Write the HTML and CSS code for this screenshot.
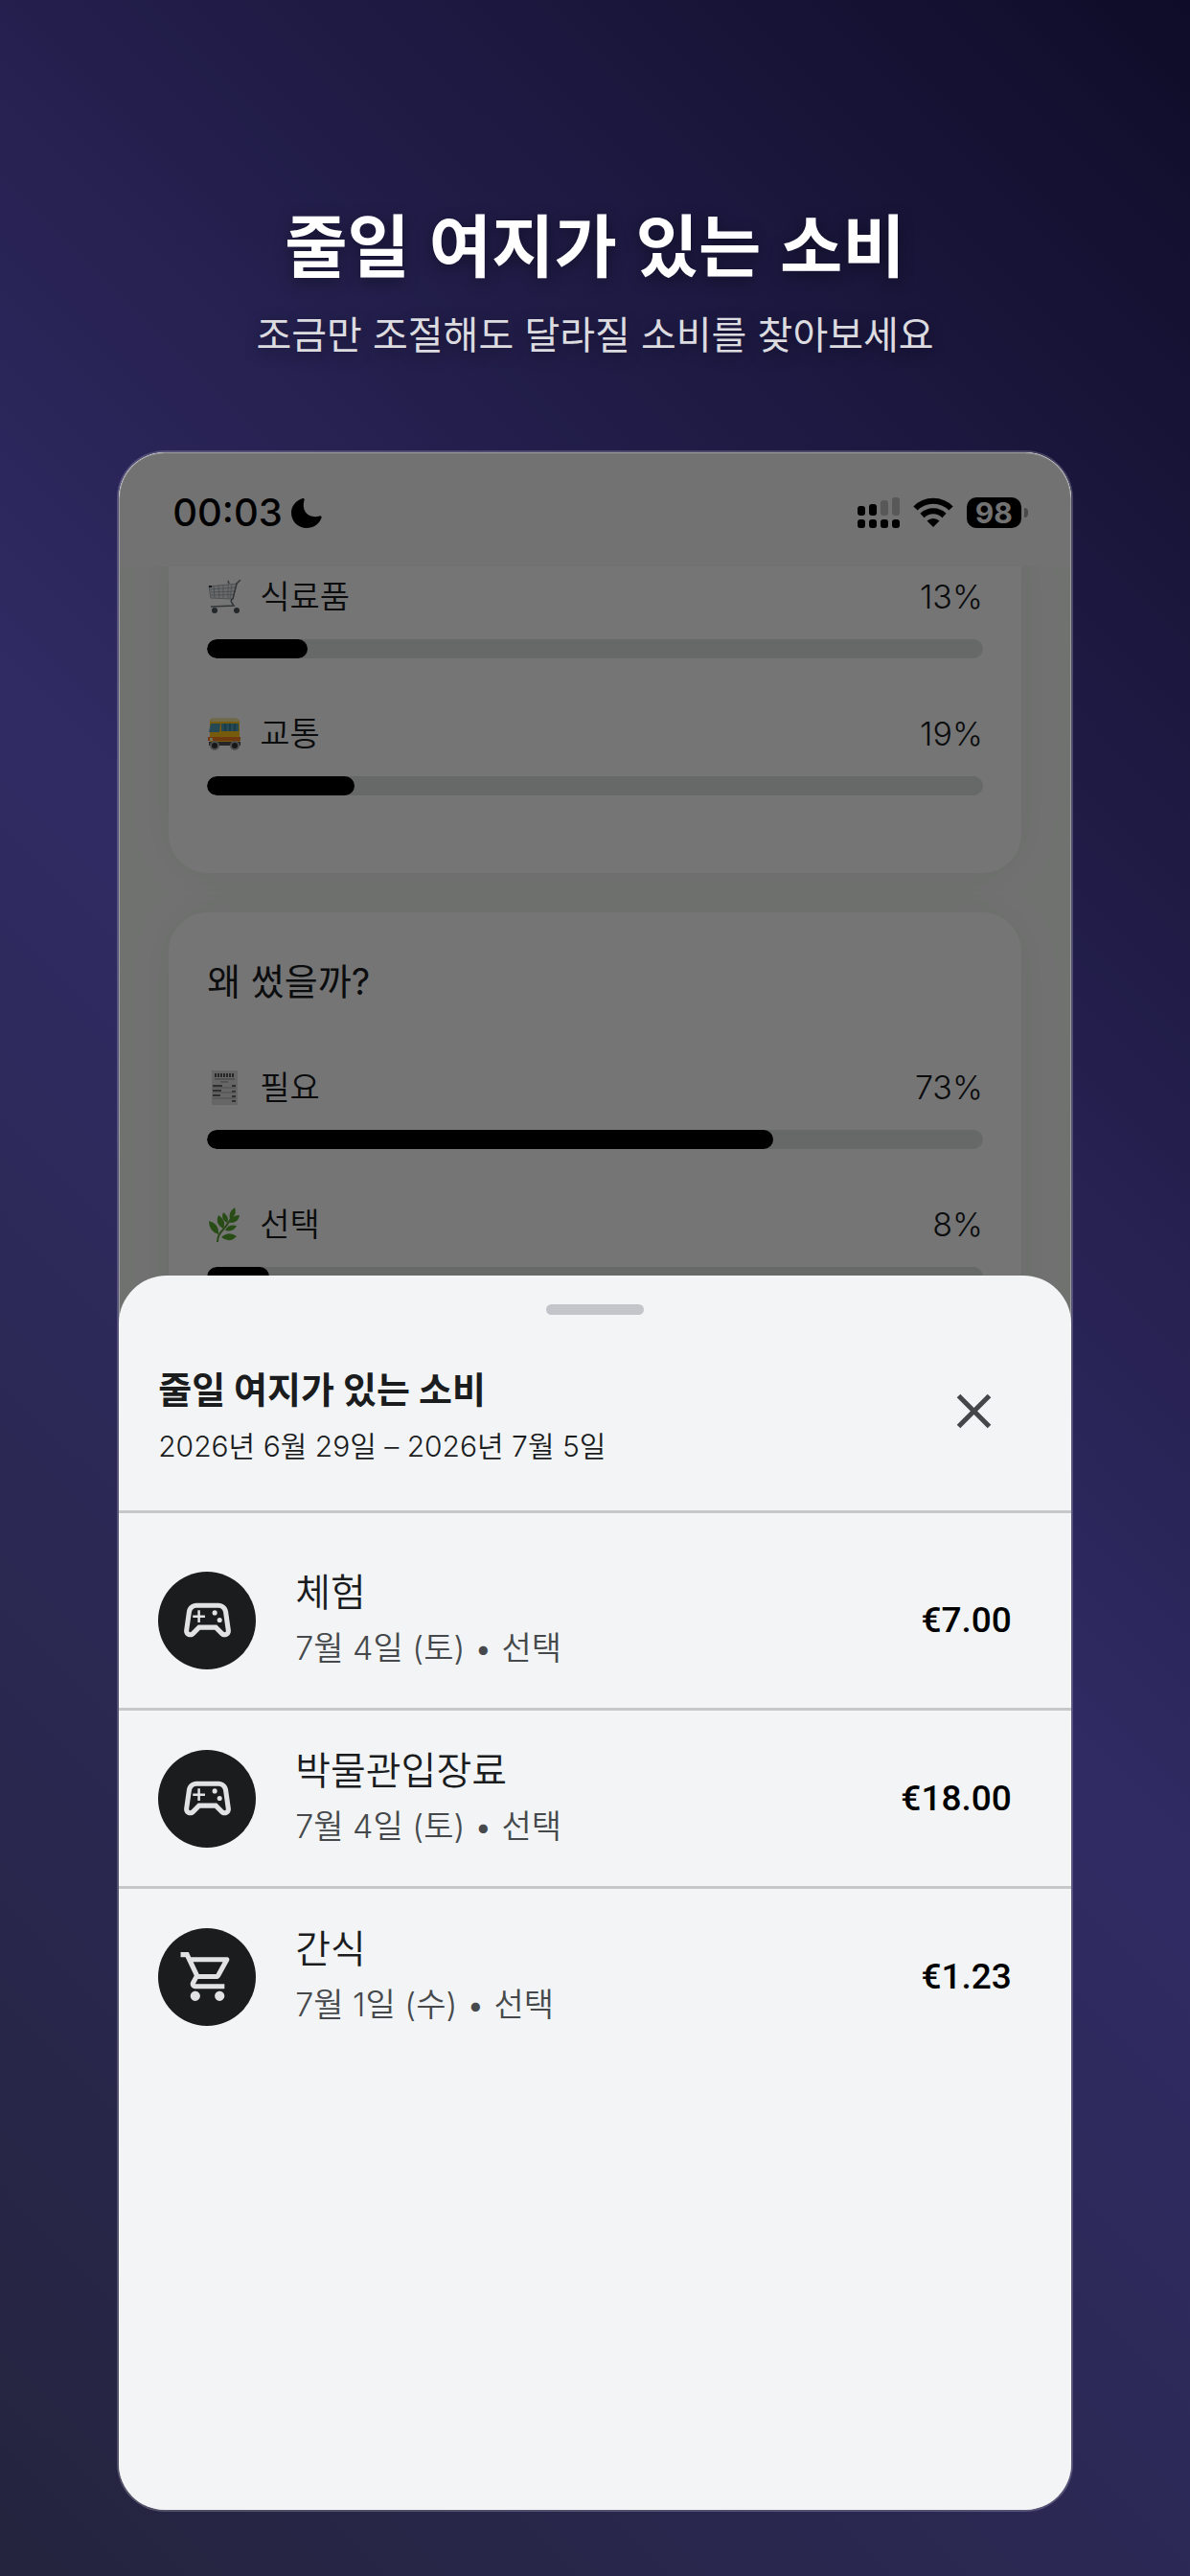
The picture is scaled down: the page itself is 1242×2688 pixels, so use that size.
FILE: index.html
```html
<!DOCTYPE html>
<html lang="ko">
<head>
  <meta charset="UTF-8">
  <meta name="viewport" content="width=device-width, initial-scale=1.0">
  <title>줄일 여지가 있는 소비</title>
  <link rel="stylesheet" href="styles.css">
</head>
<body>
  <header class="hero">
    <h1>줄일 여지가 있는 소비</h1>
    <p>조금만 조절해도 달라질 소비를 찾아보세요</p>
  </header>

  <main class="phone">
    <div class="status-bar">
      <span class="time">00:03</span>
      <svg class="moon" viewBox="0 0 32 32"><path d="M12 1C5 3 0 9 0 16c0 9 7 16 16 16 7 0 13-4 15.500-10.500.4-1.500-.5-2.500-2-2C19 22.500 10 15 13.500 3 14 1.500 13.300.6 12 1z"/></svg>
      <div class="status-icons">
        <svg class="signal" viewBox="0 0 44 32">
          <g><rect y="9" width="8" height="10" rx="3"/><rect x="12" y="7" width="8" height="12" rx="3"/><rect y="23" width="8" height="9" rx="3"/><rect x="12" y="23" width="8" height="9" rx="3"/><rect x="24" y="23" width="8" height="9" rx="3"/><rect x="36" y="23" width="8" height="9" rx="3"/></g>
          <g opacity=".22"><rect x="24" y="3" width="8" height="16" rx="3"/><rect x="36" y="0" width="8" height="19" rx="3"/></g>
        </svg>
        <svg class="wifi" viewBox="0 0 42 32">
          <g fill="none" stroke="#000" stroke-width="6"><path d="M2.500 11.500a26 26 0 0 1 37 0"/><path d="M9.500 19a16.500 16.500 0 0 1 23 0"/></g>
          <path d="M21 31l-6.500-6.500a9.500 9.500 0 0 1 13 0z"/>
        </svg>
        <span class="battery">98</span>
      </div>
    </div>

    <div class="content">
      <section class="card card-scrolled">
        <ul class="stats">
          <li>
            <div class="stat-label">
              <svg class="emoji" viewBox="0 0 36 36">
                <g fill="none" stroke="#aab0b5"><path d="M2 7l29-3-4 16-23-1z" fill="#d2d6d8" fill-opacity=".5"/><path d="M3 10l27-2M3 13l26-1M4 16l24-.5M7 7l1 12M12 6l1 13M17 6v13M22 5v14M26 5l-2 15"/><path d="M35 0l-4 4-4 16q-3 1-1 4l2 3-24 1M23 4l-1-3" stroke="#6f767b" stroke-width="1.500"/></g>
                <circle cx="8" cy="32" r="3" fill="#50555a"/><circle cx="31" cy="32" r="3" fill="#50555a"/><rect x="2" y="6" width="3" height="2" fill="#333"/>
              </svg>
              <span>식료품</span>
              <span class="percent">13%</span>
            </div>
            <div class="bar"><div class="bar-fill" style="width: 13%"></div></div>
          </li>
          <li>
            <div class="stat-label">
              <svg class="emoji" viewBox="0 0 36 36">
                <path d="M5 2h25q4 0 4 4v24H3V7q0-5 2-5z" fill="#ffc61a"/><path d="M6 1h23q4 0 4 4H4q0-3 2-4z" fill="#f2e6a5"/>
                <path d="M4 7h10l-1 9H2zM15 7h18v8H15z" fill="#4f9eb8"/><path d="M19 7v8M24 7v8M29 7v8" stroke="#286779"/>
                <path d="M1 21h34v4H1z" fill="#f47b20"/><path d="M2 26h33v4H2z" fill="#535158"/><rect x="3" y="22" width="3" height="3" fill="#fff3b0"/>
                <g fill="#333" stroke="#aaa" stroke-width="2"><circle cx="8" cy="30" r="4"/><circle cx="29" cy="30" r="4"/></g>
              </svg>
              <span>교통</span>
              <span class="percent">19%</span>
            </div>
            <div class="bar"><div class="bar-fill" style="width: 19%"></div></div>
          </li>
        </ul>
      </section>

      <section class="card">
        <h2>왜 썼을까?</h2>
        <ul class="stats">
          <li>
            <div class="stat-label">
              <svg class="emoji" viewBox="0 0 36 36">
                <rect x="5" width="27" height="36" fill="#dedede"/>
                <path d="M8 5h21" stroke="#555" stroke-width="4" stroke-dasharray="2 1"/>
                <path d="M8 9h21M14 12h8" stroke="#888"/>
                <path d="M6 16h10M26 16h4M6 21h9M26 22h4M6 26h8M26 27h4M26 32h4" stroke="#666" stroke-width="2"/><path d="M6 18h24M6 23h24M6 29h24" stroke="#aaa"/>
              </svg>
              <span>필요</span>
              <span class="percent">73%</span>
            </div>
            <div class="bar"><div class="bar-fill" style="width: 73%"></div></div>
          </li>
          <li>
            <div class="stat-label">
              <svg class="emoji" viewBox="0 0 36 36">
                <path d="M11 36q0-7 5-12t13-19" fill="none" stroke="#5f9b38" stroke-width="2"/>
                <g fill="#55a630"><path d="M2 14q11 3 10 14Q2 25 2 14z"/><path d="M12 8q9 6 5 14-9-5-5-14z"/><path d="M17 5q7 5 4 11-7-4-4-11z"/><path d="M29 0q3 7-5 12-2-7 5-12z"/><path d="M34 8q-1 8-10 8 1-8 10-8z"/><path d="M31 19q-3 7-12 5 3-7 12-5z"/><path d="M31 30q-7 8-16 1 8-7 16-1z"/></g>
              </svg>
              <span>선택</span>
              <span class="percent">8%</span>
            </div>
            <div class="bar"><div class="bar-fill" style="width: 8%"></div></div>
          </li>
        </ul>
      </section>
    </div>

    <div class="overlay"></div>

    <section class="sheet">
      <div class="handle"></div>
      <div class="sheet-header">
        <div>
          <h2>줄일 여지가 있는 소비</h2>
          <p>2026년 6월 29일 – 2026년 7월 5일</p>
        </div>
        <button class="close-btn" type="button" aria-label="닫기">
          <svg viewBox="0 0 24 24"><path d="M19 6.410 17.590 5 12 10.590 6.410 5 5 6.410 10.590 12 5 17.590 6.410 19 12 13.410 17.590 19 19 17.590 13.410 12z"/></svg>
        </button>
      </div>

      <ul class="expenses">
        <li>
          <div class="category-icon"><svg viewBox="0 0 24 24"><path d="M21.580 16.090l-1.090-7.660C20.210 6.460 18.520 5 16.530 5H7.470C5.480 5 3.790 6.460 3.510 8.430l-1.090 7.660C2.200 17.630 3.390 19 4.940 19c.68 0 1.320-.27 1.800-.75L9 16h6l2.250 2.250c.48.48 1.130.75 1.800.75 1.560 0 2.750-1.370 2.530-2.910zm-2.100.72c-.08.09-.21.19-.42.19-.15 0-.29-.06-.39-.16L15.830 14H8.170l-2.840 2.840c-.1.1-.24.16-.39.16-.21 0-.34-.1-.42-.19-.08-.09-.16-.23-.13-.44l1.090-7.660C5.630 7.740 6.480 7 7.470 7h9.060c.99 0 1.840.74 1.980 1.720l1.090 7.660c.03.200-.05.340-.12.430z"/><path d="M9 8H8v2H6v1h2v2h1v-2h2v-1H9z"/><circle cx="17" cy="12" r="1"/><circle cx="15" cy="9" r="1"/></svg></div>
          <div class="expense-info">
            <h3>체험</h3>
            <p>7월 4일 (토) • 선택</p>
          </div>
          <span class="price">€7.00</span>
        </li>
        <li>
          <div class="category-icon"><svg viewBox="0 0 24 24"><path d="M21.580 16.090l-1.090-7.660C20.210 6.460 18.520 5 16.530 5H7.470C5.480 5 3.790 6.460 3.510 8.430l-1.090 7.660C2.200 17.630 3.390 19 4.940 19c.68 0 1.320-.27 1.800-.75L9 16h6l2.250 2.250c.48.48 1.130.75 1.800.75 1.560 0 2.750-1.370 2.530-2.910zm-2.100.72c-.08.09-.21.19-.42.19-.15 0-.29-.06-.39-.16L15.830 14H8.170l-2.840 2.840c-.1.1-.24.16-.39.16-.21 0-.34-.1-.42-.19-.08-.09-.16-.23-.13-.44l1.090-7.660C5.630 7.740 6.480 7 7.470 7h9.060c.99 0 1.840.74 1.980 1.720l1.090 7.660c.03.200-.05.340-.12.430z"/><path d="M9 8H8v2H6v1h2v2h1v-2h2v-1H9z"/><circle cx="17" cy="12" r="1"/><circle cx="15" cy="9" r="1"/></svg></div>
          <div class="expense-info">
            <h3>박물관입장료</h3>
            <p>7월 4일 (토) • 선택</p>
          </div>
          <span class="price">€18.00</span>
        </li>
        <li>
          <div class="category-icon"><svg viewBox="0 0 24 24"><path d="M15.550 13c.75 0 1.410-.41 1.750-1.030l3.580-6.490c.37-.66-.11-1.480-.87-1.480H5.210l-.94-2H1v2h2l3.600 7.590-1.350 2.440C4.520 15.370 5.480 17 7 17h12v-2H7l1.100-2h7.450zM6.160 6h12.150l-2.760 5H8.530L6.160 6zM7 18c-1.100 0-1.990.9-1.990 2S5.900 22 7 22s2-.9 2-2-.9-2-2-2zm10 0c-1.100 0-1.990.9-1.990 2s.89 2 1.990 2 2-.9 2-2-.9-2-2-2z"/></svg></div>
          <div class="expense-info">
            <h3>간식</h3>
            <p>7월 1일 (수) • 선택</p>
          </div>
          <span class="price">€1.23</span>
        </li>
      </ul>
    </section>
  </main>
</body>
</html>
```
FILE: styles.css
```css
* {
  box-sizing: border-box;
}

body {
  font-family: Inter, "Noto Sans CJK KR", sans-serif;
  margin: 0;
  min-height: 100vh;
  padding: 202px 0 67px;
  background: linear-gradient(225deg, #0f0c29, #302b63, #24243e);
  display: flex;
  flex-direction: column;
  align-items: center;
}

h1, h2, h3, p, ul {
  margin: 0;
  padding: 0;
}

ul {
  list-style: none;
}

.hero {
  font-family: "Noto Sans CJK KR", sans-serif;
  text-align: center;
  color: #fff;
  margin-bottom: 93px;
  text-shadow: 0 4px 16px rgba(0, 0, 0, 0.4);
}

.hero h1 {
  font-size: 71px;
  line-height: 100px;
  font-weight: 700;
}

.hero p {
  font-size: 40px;
  line-height: 60px;
  margin-top: 15px;
  color: #dcdce0;
}

.phone {
  position: relative;
  box-sizing: content-box;
  flex: 1;
  width: 80%;
  border: 2px solid rgba(255, 255, 255, 0.2);
  border-radius: 50px;
  background: #f5f8f5;
  background-clip: padding-box;
  overflow: hidden;
  display: flex;
  flex-direction: column;
}

.status-bar {
  display: flex;
  align-items: center;
  gap: 9px;
  height: 119px;
  padding: 6px 52px 0 56px;
  background: #f8f8f8;
}

.time {
  font-size: 40px;
  font-weight: 500;
}

.moon {
  width: 32px;
  height: 32px;
}

.status-icons {
  display: flex;
  align-items: center;
  gap: 14px;
  margin-left: auto;
}

.signal {
  width: 44px;
  height: 32px;
}

.wifi {
  width: 42px;
  height: 32px;
}

.battery {
  position: relative;
  width: 57px;
  height: 32px;
  border-radius: 10px;
  background: #000;
  color: #f8f8f8;
  font-size: 30px;
  line-height: 32px;
  font-weight: 700;
  text-align: center;
}

.battery::after {
  content: "";
  position: absolute;
  top: 11px;
  right: -7px;
  width: 4px;
  height: 10px;
  border-radius: 0 5px 5px 0;
  background: #a0a0a0;
}

.content {
  flex: 1 0 0;
  padding: 0 52px;
  overflow: hidden;
}

.card {
  padding: 40px;
  margin-bottom: 41px;
  border-radius: 41px;
  background: #fff;
  box-shadow: 0 0 50px rgba(0, 0, 0, 0.06);
}

.card-scrolled {
  margin-top: -46px;
}

.card h2 {
  font-size: 38px;
  line-height: 64px;
  font-weight: 400;
  margin-bottom: 41px;
  color: #1a1c1e;
}

.stats li {
  padding-top: 14px;
  margin-bottom: 41px;
}

.stat-label {
  display: flex;
  align-items: center;
  gap: 19px;
  font-size: 34px;
  line-height: 48px;
  font-weight: 350;
  color: #1a1c1e;
  margin-bottom: 20px;
}

.emoji {
  width: 36px;
  height: 36px;
}

.percent {
  margin-left: auto;
}

.bar {
  height: 20px;
  border-radius: 10px;
  background: #e1e5e3;
  overflow: hidden;
}

.bar-fill {
  height: 100%;
  border-radius: 10px;
  background: #000;
}

.overlay {
  position: absolute;
  inset: 0;
  border: 1px solid rgba(255, 255, 255, 0.3);
  border-radius: 48px;
  background: rgba(0, 0, 0, 0.54);
}

.sheet {
  position: absolute;
  top: 40%;
  right: 0;
  bottom: 0;
  left: 0;
  border-radius: 50px 50px 0 0;
  background: #f2f4f6;
  color: #1a1c1e;
}

.handle {
  width: 102px;
  height: 11px;
  margin: 30px auto 0;
  border-radius: 6px;
  background: #c4c5ca;
}

.sheet-header {
  display: flex;
  justify-content: space-between;
  align-items: flex-start;
  padding: 48px 60px 38px 41px;
  border-bottom: 3px solid #c6c7c9;
}

.sheet-header h2 {
  font-size: 38px;
  line-height: 60px;
  font-weight: 700;
}

.sheet-header p {
  font-size: 30px;
  line-height: 58px;
  font-weight: 350;
}

.close-btn {
  display: flex;
  align-items: center;
  justify-content: center;
  width: 82px;
  height: 106px;
  padding: 0;
  border: none;
  background: none;
  cursor: pointer;
}

.close-btn svg {
  width: 61px;
  height: 61px;
  fill: #43474a;
}

.expenses {
  padding-top: 20px;
}

.expenses li {
  display: flex;
  align-items: center;
  gap: 41px;
  padding: 34px 62px 33px 41px;
  border-bottom: 3px solid #c6c7c9;
}

.expenses li:last-child {
  border-bottom: none;
}

.category-icon {
  display: flex;
  align-items: center;
  justify-content: center;
  width: 102px;
  height: 102px;
  border-radius: 50%;
  background: #1a1c1e;
}

.category-icon svg {
  width: 61px;
  height: 61px;
  fill: #e2e2e5;
}

.expense-info {
  flex: 1;
}

.expense-info h3 {
  font-size: 40px;
  line-height: 58px;
  font-weight: 350;
}

.expense-info p {
  font-size: 34px;
  line-height: 58px;
  font-weight: 350;
  color: #46494c;
}

.price {
  font-family: Roboto, sans-serif;
  font-size: 37px;
  font-weight: 500;
  color: #000;
}
```
